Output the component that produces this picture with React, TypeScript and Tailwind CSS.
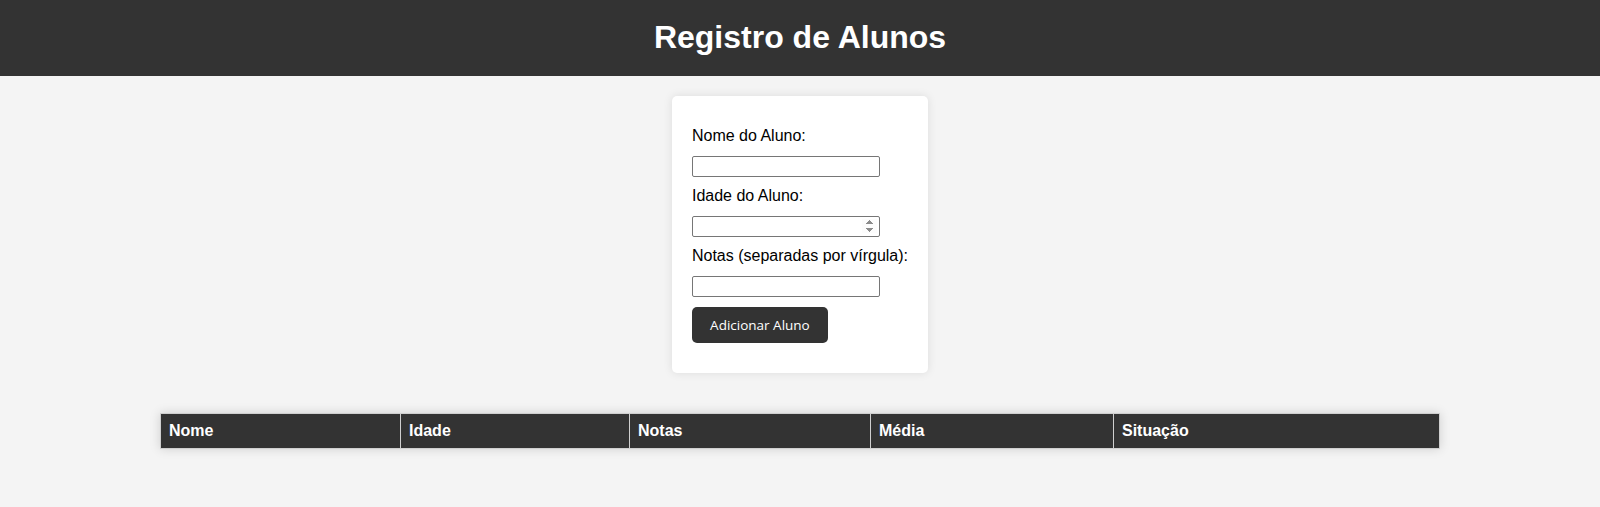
import React from "react";

export default function App() {
  const cols = ["Nome", "Idade", "Notas", "Média", "Situação"];
  const inputCls =
    "mt-[11px] block h-[21px] w-[188px] rounded-[2px] border border-[#767676] bg-white px-[2px] text-[13px] [&::-webkit-inner-spin-button]:opacity-100";
  return (
    <div className="min-h-screen bg-[#f4f4f4] font-['Liberation_Sans',Arial,sans-serif] text-black">
      <header className="h-[76px] bg-[#333333] pt-[19px] text-center text-white">
        <h1 className="text-[32px] font-bold leading-[37px]">Registro de Alunos</h1>
      </header>

      <div className="flex justify-center pt-[20px]">
        <form
          className="w-fit rounded-[5px] bg-white px-[20px] pb-[30px] pt-[31px] shadow-[0_0_10px_rgba(0,0,0,0.1)]"
          onSubmit={(e) => e.preventDefault()}
        >
          <label className="block h-[18px] text-[16px] leading-[18px]">Nome do Aluno:</label>
          <input type="text" className={inputCls} />
          <label className="mt-[10px] block h-[18px] text-[16px] leading-[18px]">Idade do Aluno:</label>
          <input type="number" className={inputCls} />
          <label className="mt-[10px] block h-[18px] text-[16px] leading-[18px]">
            Notas (separadas por vírgula):
          </label>
          <input type="text" className={inputCls} />
          <button
            type="submit"
            className="mt-[10px] flex h-[36px] w-[136px] items-center justify-center rounded-[5px] bg-[#333333] font-['Open_Sans',sans-serif] text-[13.5px] text-white"
          >
            Adicionar Aluno
          </button>
        </form>
      </div>

      <div className="flex justify-center pt-[40px]">
        <table className="w-[1280px] table-fixed border-collapse shadow-[0_0_10px_rgba(0,0,0,0.15)]">
          <colgroup>
            <col className="w-[240px]" />
            <col className="w-[229px]" />
            <col className="w-[241px]" />
            <col className="w-[243px]" />
            <col />
          </colgroup>
          <thead>
            <tr>
              {cols.map((c) => (
                <th
                  key={c}
                  className="h-[35px] border border-[#cfcfcf] bg-[#333333] px-[8px] py-[8px] text-left text-[16px] font-bold leading-[18px] text-white"
                >
                  {c}
                </th>
              ))}
            </tr>
          </thead>
          <tbody></tbody>
        </table>
      </div>
    </div>
  );
}
